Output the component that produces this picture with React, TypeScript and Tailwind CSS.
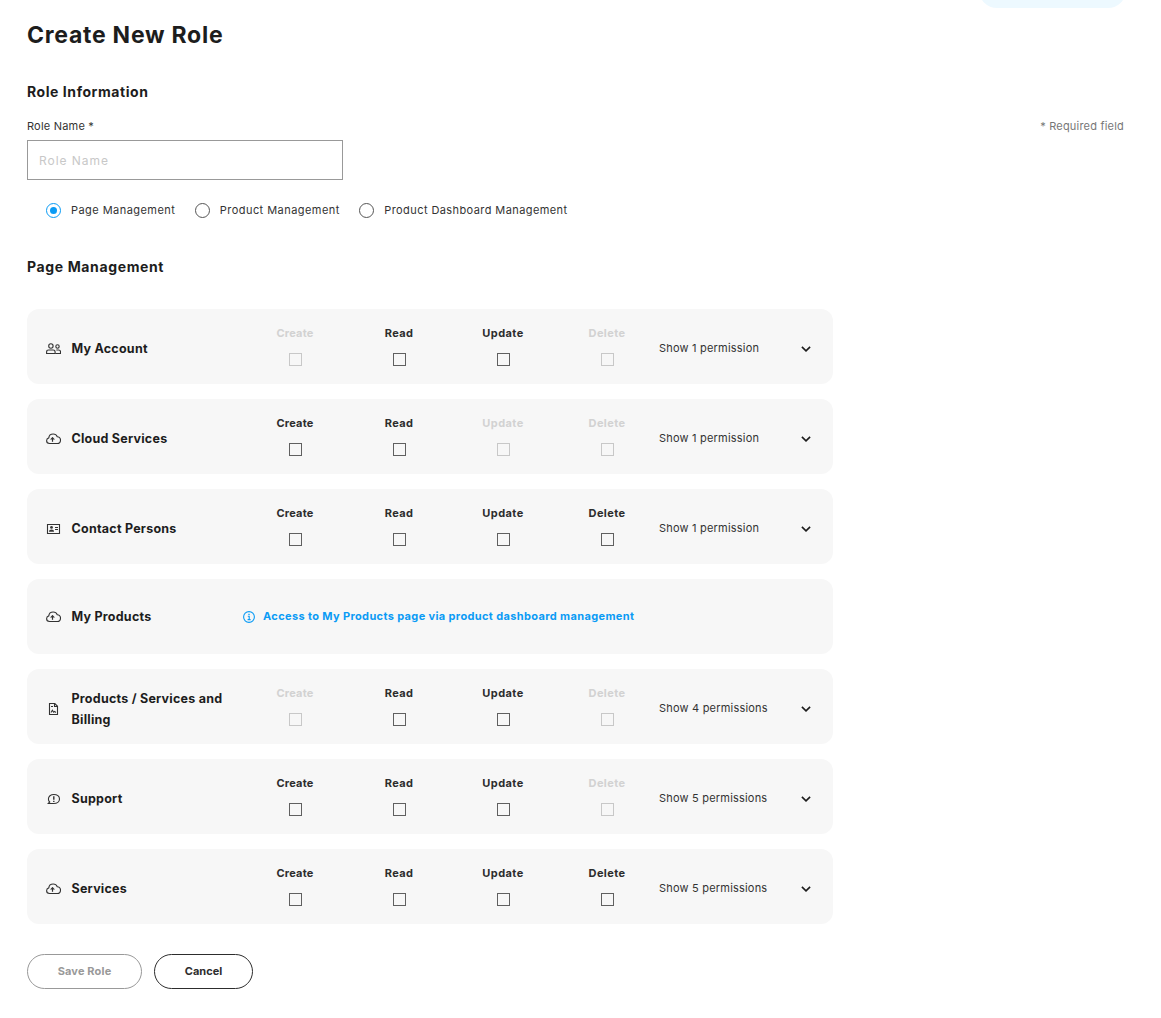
import { useState } from "react";
import type { ReactNode } from "react";

type IconName = "users" | "cloud" | "contact" | "bill" | "support";

const icons: Record<IconName, ReactNode> = {
  users: (
    <>
      <circle cx="4.900" cy="5" r="2.200" />
      <path d="M.6 12.500v-1.600c0-1.200.8-1.900 2-1.900h4.500c1.200 0 2 .7 2 1.900v1.600z" />
      <circle cx="11.500" cy="5.500" r="1.700" />
      <path d="M10.300 9h2.300c1.100 0 1.900.7 1.900 1.700v1.800H9.300" />
    </>
  ),
  cloud: (
    <>
      <path d="M3.600 12.500C1.800 12.400.6 11.300.6 9.700c0-1.400.9-2.500 2.200-2.800.2-2.300 2-3.900 4.400-3.900 1.900 0 3.400 1 4.100 2.700 1.900.2 3.200 1.600 3.200 3.400 0 2-1.300 3.400-3.100 3.400z" />
      <path d="M6.500 10.800V6.500" strokeWidth="1.200" />
      <path d="M4 8.600 6.500 6 9 8.600z" fill="currentColor" stroke="none" />
    </>
  ),
  contact: (
    <>
      <path d="M1.500 3.500h12v9h-12z" />
      <circle cx="5.500" cy="6.400" r="1.400" fill="currentColor" stroke="none" />
      <path d="M3 10.800c0-1.600 1-2.400 2.500-2.400S8 9.200 8 10.800z" fill="currentColor" stroke="none" />
      <path d="M9 6.500h3M9 8.500h3" />
    </>
  ),
  bill: (
    <>
      <path d="M3.500 2.500h5.300l2.700 2.800v8.200h-8z" />
      <path d="M8.500 2.800v2.700h2.800M5 5.500h2M5 11.500l1.400-2.200 1.300 1.900.9-.8 1.300 1.100" />
    </>
  ),
  support: (
    <>
      <path d="M2.300 12.500h5.400c3.300 0 5.800-1.900 5.800-4.600S11.100 3.500 7.900 3.500 2.400 5.400 2.400 8c0 1.300.5 2.300 1.300 3z" />
      <path d="M7.800 5.300v3.400M7.800 9.700v1.300" strokeWidth="1.400" />
    </>
  ),
};

function RowIcon({ name }: { name: IconName }) {
  return (
    <svg viewBox="0 0 15 15" className="size-[15px] shrink-0 text-[#333]" fill="none" stroke="currentColor" strokeWidth="1.100">
      {icons[name]}
    </svg>
  );
}

function InfoIcon() {
  return (
    <svg viewBox="0 0 12 12" className="size-3 shrink-0" fill="none" stroke="currentColor" strokeWidth="1.100">
      <circle cx="6" cy="6" r="5.400" />
      <path d="M4.800 5.300h1.400v3.200M4.600 8.600h3" />
      <path d="M6 2.700v1.300" strokeWidth="1.300" />
    </svg>
  );
}

const actions = [
  { name: "Create", tracking: "tracking-[0.2px]" },
  { name: "Read", tracking: "tracking-[0.3px]" },
  { name: "Update", tracking: "tracking-[0.45px]" },
  { name: "Delete", tracking: "tracking-[0.4px]" },
];

interface Row {
  icon: IconName;
  name: string;
  off?: string[];
  show?: string;
}

const rows: Row[] = [
  { icon: "users", name: "My Account", off: ["Create", "Delete"], show: "Show 1 permission" },
  { icon: "cloud", name: "Cloud Services", off: ["Update", "Delete"], show: "Show 1 permission" },
  { icon: "contact", name: "Contact Persons", off: [], show: "Show 1 permission" },
  { icon: "cloud", name: "My Products" },
  { icon: "bill", name: "Products / Services and Billing", off: ["Create", "Delete"], show: "Show 4 permissions" },
  { icon: "support", name: "Support", off: ["Delete"], show: "Show 5 permissions" },
  { icon: "cloud", name: "Services", off: [], show: "Show 5 permissions" },
];

function RowTitle({ row }: { row: Row }) {
  return (
    <>
      <RowIcon name={row.icon} />
      <span className="ml-[10.5px] w-[171.5px] shrink-0 pr-4 text-[12.5px] leading-[21px] font-bold tracking-[0.24px] text-[#1d1d1d]">
        {row.name}
      </span>
    </>
  );
}

function PermissionRow({ row }: { row: Row }) {
  if (!row.show) {
    return (
      <li className="flex h-[75px] items-center rounded-xl bg-[#f7f7f7] pl-[19px]">
        <RowTitle row={row} />
        <span className="flex items-center gap-2 text-[11px] leading-4 font-bold tracking-[0.36px] text-[#0a9bf5]">
          <InfoIcon />
          <span className="pb-[2px]">Access to My Products page via product dashboard management</span>
        </span>
      </li>
    );
  }
  return (
    <li className="flex h-[75px] items-center rounded-xl bg-[#f7f7f7] pt-1 pr-[22px] pl-[19px]">
      <RowTitle row={row} />
      {actions.map((a) => {
        const disabled = row.off?.includes(a.name) ?? false;
        return (
          <label key={a.name} className="flex w-[104px] shrink-0 flex-col items-center self-start pt-3 text-[11px] leading-4 font-bold text-[#2d2d2d] has-disabled:text-[#d2d2d2]">
            <span className={a.tracking}>{a.name}</span>
            <input type="checkbox" disabled={disabled} className="mt-3 size-[13px] appearance-none border border-[#606060] disabled:border-[#c8c8c8]" />
          </label>
        );
      })}
      <span className="pb-[2px] text-[11px] leading-4 tracking-[0.2px] whitespace-nowrap text-[#333]">{row.show}</span>
      <svg viewBox="0 0 10 6" className="mt-px ml-auto h-1.5 w-2.5 text-[#1d1d1d]" fill="none" stroke="currentColor" strokeWidth="1.600">
        <path d="M.9.9 5 4.900 9.100.9" />
      </svg>
    </li>
  );
}

const scopes = [
  { name: "Page Management", tracking: "tracking-[0.45px]" },
  { name: "Product Management", tracking: "tracking-[0.45px]" },
  { name: "Product Dashboard Management", tracking: "tracking-[0.41px]" },
];

export default function App() {
  const [scope, setScope] = useState("Page Management");
  return (
    <main className="flex h-[1018px] flex-col overflow-hidden bg-white pr-[37px] pl-[27px] font-['Inter',sans-serif] text-[#333]">
      <div className="h-2 shrink-0 overflow-hidden">
        <div className="-mt-7 -mr-0.5 ml-auto h-9 w-[147px] rounded-full bg-[#edf9ff]" />
      </div>
      <h1 className="mt-[13px] text-[23px] leading-7 font-bold tracking-[0.74px] text-[#1d1d1d]">Create New Role</h1>
      <h2 className="mt-[33px] text-[14px] leading-5 font-bold tracking-[0.56px] text-[#1d1d1d]">Role Information</h2>
      <div className="mt-4 flex justify-between text-[11px] leading-4 tracking-[0.2px]">
        <label htmlFor="role-name">Role Name *</label>
        <span className="text-[#777]">* Required field</span>
      </div>
      <input
        id="role-name"
        placeholder="Role Name"
        className="mt-1.5 h-10 w-[316px] shrink-0 border border-[#999] px-[11px] text-[12px] tracking-[0.95px] outline-none placeholder:text-[#c8c8c8]"
      />
      <div className="mt-[22px] flex h-[17px] shrink-0 items-center gap-[19.5px] pl-[19px] text-[11px] leading-4">
        {scopes.map((s) => (
          <label key={s.name} className="flex items-center gap-[10px]">
            <input
              type="radio"
              name="scope"
              checked={scope === s.name}
              onChange={() => setScope(s.name)}
              className="flex size-[15px] appearance-none items-center justify-center rounded-full border border-[#555] checked:border-[#0a9bf5] checked:before:size-[7px] checked:before:rounded-full checked:before:bg-[#0a9bf5]"
            />
            <span className={`-mt-px pb-px ${s.tracking}`}>{s.name}</span>
          </label>
        ))}
      </div>
      <h2 className="mt-[38px] text-[14px] leading-5 font-bold tracking-[0.63px] text-[#1d1d1d]">Page Management</h2>
      <ul className="mt-8 flex w-[806px] flex-col gap-[15px]">
        {rows.map((r) => (
          <PermissionRow key={r.name} row={r} />
        ))}
      </ul>
      <div className="mt-[30px] flex gap-3 text-[11px] font-bold">
        <button className="h-[35px] w-[115px] rounded-full border border-[#999] tracking-[0.15px] text-[#999]">Save Role</button>
        <button className="h-[35px] w-[99px] rounded-full border border-[#2d2d2d] text-[#2d2d2d]">Cancel</button>
      </div>
    </main>
  );
}
